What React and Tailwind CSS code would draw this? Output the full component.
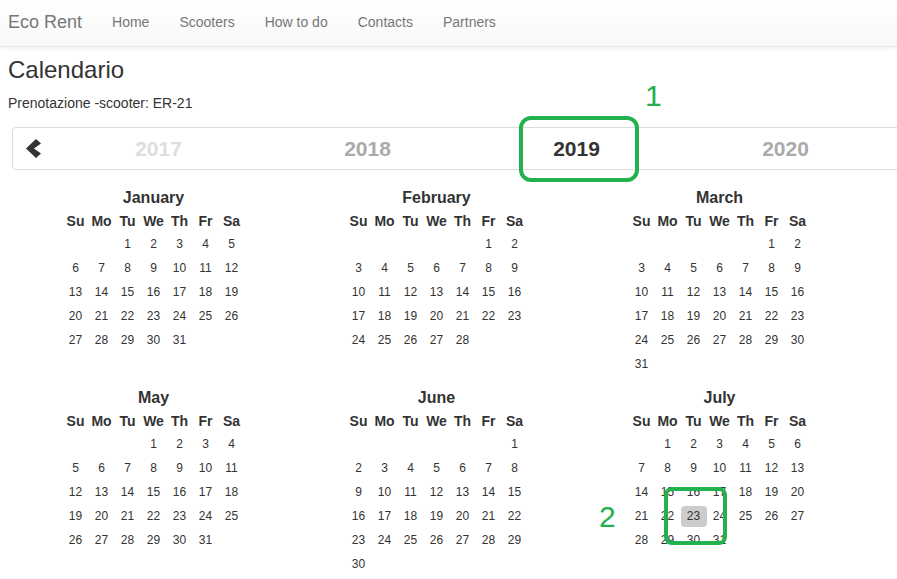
const months = [
  { name: 'January', start: 2, days: 31 },
  { name: 'February', start: 5, days: 28 },
  { name: 'March', start: 5, days: 31 },
  null,
  { name: 'May', start: 3, days: 31 },
  { name: 'June', start: 6, days: 30 },
  { name: 'July', start: 1, days: 31 },
  null,
];

const dayNames = ['Su', 'Mo', 'Tu', 'We', 'Th', 'Fr', 'Sa'];
const navLinks = ['Home', 'Scooters', 'How to do', 'Contacts', 'Partners'];

const years = [
  { y: 2017, cls: 'text-[#ddd]' },
  { y: 2018, cls: 'text-[#aaa]' },
  { y: 2019, cls: 'text-[#333]' },
  { y: 2020, cls: 'text-[#aaa]' },
];

function Month({ month }) {
  if (!month) return <div className="h-[200px] w-[283px] shrink-0" />;

  const cells = [];
  for (let i = 0; i < month.start; i++) cells.push(null);
  for (let d = 1; d <= month.days; d++) cells.push(d);

  return (
    <div className="h-[200px] w-[283px] shrink-0">
      <div className="flex h-[24px] items-center justify-center text-[16px] font-bold text-[#333]">
        {month.name}
      </div>
      <div className="mx-auto grid w-[182px] grid-cols-7">
        {dayNames.map((n) => (
          <div key={n} className="flex h-[22px] items-center justify-center text-[14px] font-bold text-[#333]">
            {n}
          </div>
        ))}
        {cells.map((d, i) => {
          const booked = month.name === 'July' && d === 23;
          return (
            <div key={i} className="flex h-[24px] items-center justify-center text-[12px] text-[#333]">
              {d ? (
                <span
                  className={
                    booked
                      ? 'flex h-[21px] w-[26px] items-center justify-center rounded-[4px] bg-[#ccc]'
                      : ''
                  }
                >
                  {d}
                </span>
              ) : null}
            </div>
          );
        })}
      </div>
    </div>
  );
}

export default function App() {
  return (
    <div
      className="relative min-h-screen w-screen overflow-hidden bg-white text-[#333]"
      style={{ fontFamily: '"Liberation Sans", Arial, sans-serif' }}
    >
      {/* barra di navigazione */}
      <nav className="flex h-[47px] items-center border-b border-[#e7e7e7] bg-gradient-to-b from-white to-[#f8f8f8] pb-[2px] shadow-[0_1px_5px_rgba(0,0,0,0.075)]">
        <span className="pl-2 pr-[15px] text-[18px] text-[#777]">Eco Rent</span>
        {navLinks.map((l) => (
          <a key={l} className="px-[15px] text-[14px] text-[#777]">
            {l}
          </a>
        ))}
      </nav>

      <div className="px-2">
        <h1 className="mt-[10px] text-[24px] leading-[26px] text-[#333]">Calendario</h1>
        <p className="mt-[10px] text-[14px] leading-[20px] text-[#333]">Prenotazione -scooter: ER-21</p>

        <div className="ml-1 w-[1132px]">
          <div className="mt-[14px] flex h-[43px] items-center rounded-[4px] border border-[#ddd]">
            <div className="flex w-[41px] items-center justify-center">
              <svg width="16" height="19" viewBox="0 0 16 19">
                <polygon points="10,0 15,4.5 8,9.5 15,14.5 10,19 0,9.5" fill="#333" />
              </svg>
            </div>
            {years.map((y) => (
              <div key={y.y} className={`w-[209px] text-center text-[21px] font-bold ${y.cls}`}>
                {y.y}
              </div>
            ))}
          </div>

          <div className="mt-[16px] flex flex-wrap">
            {months.map((m, i) => (
              <Month key={i} month={m} />
            ))}
          </div>
        </div>
      </div>

      {/* annotazioni verdi */}
      <span className="absolute left-[645px] top-[81px] text-[30px] leading-none text-[#22b14c]">1</span>
      <div className="absolute left-[519px] top-[116px] h-[66px] w-[120px] rounded-[12px] border-4 border-[#22b14c]" />
      <span className="absolute left-[599px] top-[502px] text-[30px] leading-none text-[#22b14c]">2</span>
      <div className="absolute left-[664px] top-[487px] h-[58px] w-[63px] rounded-[8px] border-4 border-[#22b14c]" />
    </div>
  );
}
